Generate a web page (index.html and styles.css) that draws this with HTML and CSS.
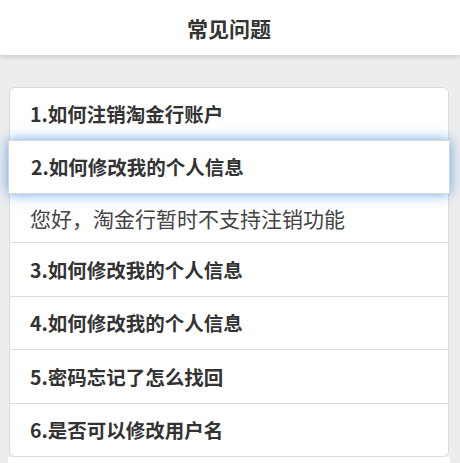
FILE: index.html
```html
<!DOCTYPE html>
<html lang="zh-CN">
<head>
<meta charset="utf-8">
<title>常见问题</title>
<link rel="stylesheet" href="styles.css">
</head>
<body>
<header class="topbar"><h1 class="title">常见问题</h1></header>
<main class="page">
  <ul class="faq">
    <li class="q q-first">1.如何注销淘金行账户</li>
    <li class="q q-active">2.如何修改我的个人信息</li>
    <li class="answer">您好，淘金行暂时不支持注销功能</li>
    <li class="q">3.如何修改我的个人信息</li>
    <li class="q">4.如何修改我的个人信息</li>
    <li class="q">5.密码忘记了怎么找回</li>
    <li class="q">6.是否可以修改用户名</li>
  </ul>
  <div class="more"></div>
</main>
</body>
</html>
```
FILE: styles.css
```css
html, body {
  margin: 0;
  padding: 0;
}
body {
  background: #ededed;
  font-family: "Noto Sans CJK SC", "Noto Sans", sans-serif;
  color: #333;
  overflow: hidden;
}
.topbar {
  height: 55px;
  background: #fff;
  box-shadow: 0 2px 5px rgba(0, 0, 0, 0.16);
  display: flex;
  align-items: center;
  justify-content: center;
  position: relative;
  z-index: 1;
}
.title {
  margin: 0 0 0 -2px;
  font-size: 21px;
  font-weight: 700;
  color: #333;
}
.page {
  padding: 32px 10px 0 8px;
}
.faq {
  list-style: none;
  margin: 0 1px;
  padding: 0;
  background: #fff;
  border: 1px solid #dcdcdc;
  border-radius: 6px;
}
.q, .answer {
  display: flex;
  align-items: center;
  padding-left: 20px;
  line-height: 1;
}
.q {
  font-size: 19.5px;
  font-weight: 700;
  height: 52.5px;
  border-top: 1px solid #dcdcdc;
  color: #333;
}
.q-first {
  border-top: none;
  height: 52px;
}
.q-active {
  height: 52px;
  margin: 0 -2px;
  padding-left: 22px;
  border: 1px solid #d8d8d8;
  background: #fff;
  box-shadow: 0 0 12px rgba(60, 140, 220, 0.8);
  position: relative;
}
.answer {
  font-size: 21px;
  height: 48px;
  color: #444;
  font-weight: 400;
  padding-left: 20px;
}
.more {
  height: 20px;
  background: #fff;
}
```
